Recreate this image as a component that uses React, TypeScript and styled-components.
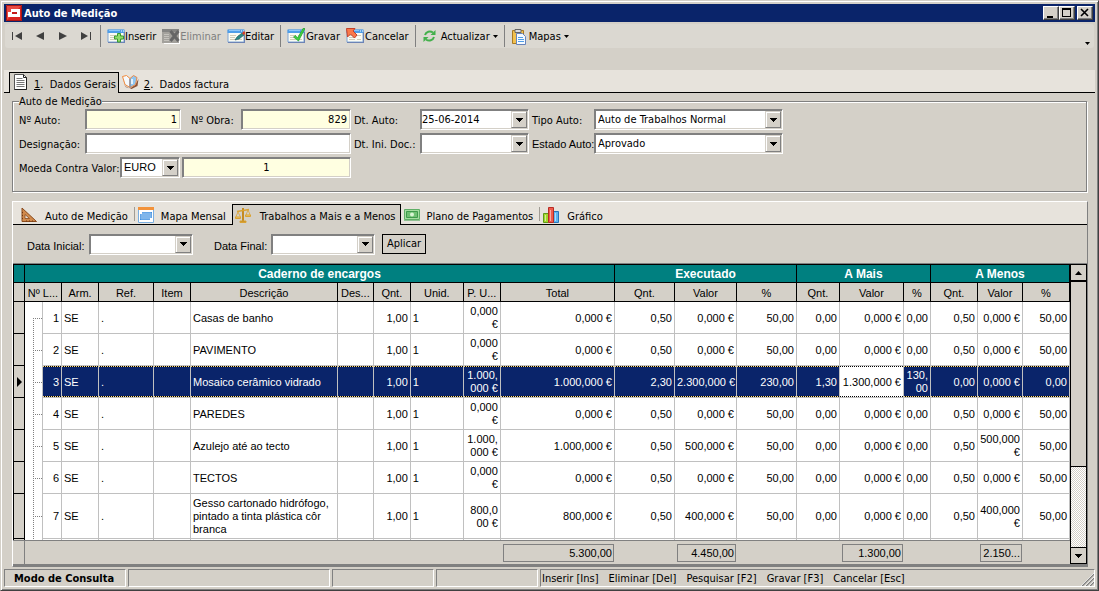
import React from "react";
import styled, { createGlobalStyle, css } from "styled-components";

const face = "#d4d0c8";
const strip = "#e7e3dc";
const shade = "#808080";
const navy = "#0a246a";
const ui = '"DejaVu Sans Condensed", "DejaVu Sans", sans-serif';
const sans = '"Liberation Sans", Arial, sans-serif';

const Global = createGlobalStyle`
  *, *::before, *::after { box-sizing: border-box; }
  body { margin: 0; background: ${face}; }
  button, input, select { font: inherit; color: inherit; margin: 0; padding: 0; border-radius: 0; }
`;

const Window = styled.div`
  display: flex;
  flex-direction: column;
  min-height: 100vh;
  padding: 3px;
  background: ${face};
  border: 1px solid;
  border-color: ${face} #404040 #404040 ${face};
  box-shadow: inset 1px 1px #fff, inset -1px -1px ${shade};
  font: 11px/13px ${ui};
  color: #000;
`;

const TitleBar = styled.header`
  display: flex;
  align-items: center;
  height: 18px;
  padding: 0 2px;
  gap: 2px;
  background: ${navy};
  color: #fff;
`;

const Title = styled.h1`
  flex: 1;
  margin: 0;
  font-size: 11px;
  font-weight: bold;
`;

const Caption = styled.div`
  display: flex;
`;

const CaptionButton = styled.button<{ $apart?: boolean }>`
  width: 16px;
  height: 14px;
  margin-left: ${(p) => (p.$apart ? "2px" : "0")};
  background: ${face};
  border: 1px solid;
  border-color: #fff #404040 #404040 #fff;
  box-shadow: inset -1px -1px ${shade};
  svg { display: block; }
`;

const ToolBar = styled.div`
  display: flex;
  align-items: center;
  height: 24px;
  margin: 2px 1px 22px;
  background: #dbd8d1;
  border-radius: 3px;
`;

const NavButton = styled.button`
  display: flex;
  justify-content: center;
  width: 23px;
  border: 0;
  background: none;
`;

const Divider = styled.span`
  width: 1px;
  height: 22px;
  margin: 0 3px;
  background: ${shade};
`;

const ToolButton = styled.button<{ $gap?: number }>`
  display: flex;
  align-items: center;
  gap: ${(p) => p.$gap || 0}px;
  padding: 0 3px;
  border: 0;
  background: none;
  white-space: nowrap;
  &:disabled { color: ${shade}; }
  svg { flex: none; }
`;

const MenuArrow = styled.svg`
  margin-left: 1px;
`;

const Overflow = styled.button`
  align-self: flex-end;
  width: 14px;
  height: 14px;
  margin-left: auto;
  border: 0;
  background: none;
`;

const TabStrip = styled.div`
  display: flex;
  align-items: flex-end;
  height: 23px;
  padding-left: 5px;
  background: linear-gradient(#000, #000) bottom / 100% 1px no-repeat ${strip};
`;

const MainTab = styled.button<{ $on?: boolean }>`
  display: flex;
  align-items: center;
  gap: 5px;
  height: 21px;
  padding: 3px 2px 0 3px;
  border: 0;
  background: none;
  white-space: pre;
  ${(p) => p.$on && css`
    background: ${face};
    border: 1px solid #000;
    border-bottom: 0;
  `}
  svg { flex: none; margin-top: -4px; }
`;

const Page = styled.main`
  flex: 1;
  display: flex;
  flex-direction: column;
  padding: 2px 7px 2px 8px;
`;

const Group = styled.fieldset`
  display: flex;
  align-items: flex-start;
  gap: 3px;
  min-width: 0;
  margin: 0 1px 0 0;
  padding: 1px 6px 13px;
  border: 1px solid ${shade};
  box-shadow: 1px 1px #fff, inset 1px 1px #fff;
`;

const Legend = styled.legend`
  padding: 0;
  height: 13px;
  background: ${face};
`;

const FieldColumn = styled.div`
  display: flex;
  flex-direction: column;
  gap: 3px;
`;

const FieldRow = styled.div`
  display: flex;
  align-items: center;
  gap: 2px;
`;

const Label = styled.label<{ $w: number; $sans?: boolean; $indent?: boolean }>`
  width: ${(p) => p.$w}px;
  padding-top: 2px;
  padding-left: ${(p) => (p.$indent ? "8px" : "0")};
  white-space: nowrap;
  font-family: ${(p) => (p.$sans ? sans : ui)};
`;

const sunken = css`
  height: 21px;
  border: 1px solid;
  border-color: ${shade} #fff #fff ${shade};
  box-shadow: inset 1px 1px ${shade}, inset -1px -1px ${face};
`;

const TextBox = styled.input<{ $w: number; $locked?: boolean; $align?: string }>`
  ${sunken}
  width: ${(p) => p.$w}px;
  padding: 0 3px;
  background: ${(p) => (p.$locked ? "#ffffe1" : "#fff")};
  text-align: ${(p) => p.$align || "left"};
  outline: 0;
`;

const ComboBox = styled.div<{ $w: number; $sans?: boolean }>`
  ${sunken}
  display: grid;
  grid-template-columns: 1fr 16px;
  width: ${(p) => p.$w}px;
  padding: 1px;
  background: #fff;
  font-family: ${(p) => (p.$sans ? sans : ui)};
  input, select {
    grid-row: 1;
    width: 100%;
    min-width: 0;
    padding: 0;
    border: 0;
    background: none;
    outline: 0;
    appearance: none;
  }
  select { grid-column: 1 / 3; padding: 0 2px; }
`;

const raised = css`
  background: ${face};
  border: 1px solid;
  border-color: ${face} ${shade} ${shade} ${face};
  box-shadow: inset 1px 1px #fff;
`;

const DropButton = styled.button`
  ${raised}
  grid-area: 1 / 2;
  display: grid;
  place-items: center;
`;

const DropMark = styled.span`
  ${raised}
  grid-area: 1 / 2;
  display: grid;
  place-items: center;
  pointer-events: none;
`;

const Panel = styled.section`
  margin-top: 9px;
  border: 1px solid;
  border-color: #fff ${shade} ${shade} #fff;
`;

const PanelTabs = styled.div`
  display: flex;
  align-items: flex-end;
  height: 23px;
  padding-left: 5px;
  background: linear-gradient(#000, #000) bottom / 100% 1px no-repeat ${strip};
`;

const PanelTab = styled.button<{ $on?: boolean }>`
  display: flex;
  align-items: center;
  gap: 7px;
  height: 21px;
  padding: 4px 6px 0 3px;
  border: 0;
  background: none;
  white-space: nowrap;
  ${(p) => p.$on && css`
    background: ${face};
    border: 1px solid #000;
    border-bottom: 0;
    padding: 3px 4px 0 2px;
  `}
  svg { flex: none; margin-top: -4px; }
`;

const TabDivider = styled.span`
  width: 1px;
  height: 14px;
  margin-bottom: 4px;
  background: #a09c94;
`;

const Filters = styled.form`
  display: flex;
  align-items: center;
  height: 38px;
  padding: 0 14px;
  gap: 2px;
  ${Label} { padding-top: 4px; }
`;

const Apply = styled.button`
  height: 20px;
  margin-left: 5px;
  padding: 0 4px 1px;
  background: ${face};
  border: 1px solid #000;
`;

const Spacer = styled.span`
  width: 17px;
`;

const GridFrame = styled.div`
  display: flex;
  border-top: 1px solid ${shade};
  border-bottom: 2px solid ${shade};
`;

const Table = styled.table`
  flex: 1;
  width: 0;
  table-layout: fixed;
  border-collapse: separate;
  border-spacing: 0;
  background: #fff;
  font: 11px/13px ${sans};
`;

const BandHead = styled.th`
  height: 19px;
  padding: 1px 0 0;
  background: #008080;
  color: #fff;
  font-size: 12px;
  border: solid #000;
  border-width: 1px 1px 1px 0;
  &:first-child { border-left-width: 1px; }
`;

const ColHead = styled.th`
  height: 19px;
  padding: 2px 0 0;
  background: ${face};
  font-weight: normal;
  white-space: nowrap;
  overflow: hidden;
  border: solid #000;
  border-width: 0 1px 1px 0;
  &:first-child { border-left-width: 1px; }
`;

const Marker = styled.td`
  padding: 0 0 0 3px;
  background: ${face};
  border: solid #000;
  border-width: 0 1px 1px 1px;
  svg { display: block; }
`;

const Branch = styled.td<{ $first?: boolean }>`
  padding: 0;
  border-right: 1px solid #c0c0c0;
  background:
    repeating-linear-gradient(90deg, ${shade} 0 1px, transparent 1px 2px) 8px 50% / 9px 1px no-repeat,
    repeating-linear-gradient(${shade} 0 1px, transparent 1px 2px) 8px 100% / 1px ${(p) => (p.$first ? "50%" : "100%")} no-repeat;
`;

const Cell = styled.td<{ $right?: boolean; $editing?: boolean; $wrap?: boolean }>`
  padding: 1px 2px 0;
  border: solid #c0c0c0;
  border-width: 0 1px 1px 0;
  text-align: ${(p) => (p.$right ? "right" : "left")};
  white-space: ${(p) => (p.$wrap ? "normal" : "pre")};
  ${(p) => p.$editing && css`
    &&& {
      color: #000;
      background:
        repeating-linear-gradient(90deg, #000 0 1px, #fff 1px 2px) top / 100% 1px no-repeat,
        repeating-linear-gradient(90deg, #000 0 1px, #fff 1px 2px) bottom / 100% 1px no-repeat,
        #fff;
      padding-left: 0;
    }
  `}
`;

const Row = styled.tr<{ $tall?: boolean; $on?: boolean }>`
  height: ${(p) => (p.$tall ? "45px" : "32px")};
  ${(p) => p.$on && css`
    ${Cell} {
      color: #fff;
      background:
        repeating-linear-gradient(90deg, #ffdb80 0 1px, #000 1px 2px) top / 100% 1px no-repeat,
        repeating-linear-gradient(90deg, #ffdb80 0 1px, #000 1px 2px) bottom / 100% 1px no-repeat,
        ${navy};
      background-clip: padding-box;
    }
  `}
`;

const NextRow = styled.tr`
  height: 1px;
  td { padding: 0; border-right: 1px solid #c0c0c0; }
  td:first-child { background: ${face}; border-color: #000; border-left: 1px solid #000; }
`;

const FootCell = styled.td`
  height: 24px;
  padding: 0 1px 0 2px;
  background: ${face};
  border-top: 1px solid ${shade};
  &:first-child { border-right: 1px solid ${shade}; }
`;

const Sum = styled.output`
  display: block;
  height: 18px;
  padding: 2px 1px 0;
  border: 1px solid ${shade};
  text-align: right;
`;

const ScrollBar = styled.div`
  display: flex;
  flex-direction: column;
  width: 17px;
  border: 1px solid #000;
  background: repeating-conic-gradient(#fff 0 25%, ${face} 0 50%) 0 0 / 2px 2px;
`;

const ScrollButton = styled.button<{ $down?: boolean }>`
  display: grid;
  place-items: center;
  height: 16px;
  background: ${face};
  border: solid #000;
  border-width: ${(p) => (p.$down ? "1px 0 0" : "0 0 1px")};
`;

const Track = styled.div`
  flex: 1;
`;

const Thumb = styled.div`
  height: 70%;
  background: ${face};
  border: solid #000;
  border-width: 1px 0;
`;

const StatusBar = styled.footer`
  display: flex;
  gap: 2px;
  height: 18px;
`;

const StatusPanel = styled.div<{ $w?: number; $bold?: boolean }>`
  display: flex;
  align-items: center;
  gap: 10px;
  ${(p) => (p.$w ? `width: ${p.$w}px;` : "flex: 1;")}
  padding-left: ${(p) => (p.$bold ? "9px" : "1px")};
  font-weight: ${(p) => (p.$bold ? "bold" : "normal")};
  white-space: nowrap;
  border: 1px solid;
  border-color: ${shade} #fff #fff ${shade};
`;

const Grip = styled.svg`
  margin-left: auto;
  align-self: flex-end;
`;

const Down = () => (
  <svg width="7" height="4" viewBox="0 0 7 4" shapeRendering="crispEdges"><path d="M0 0h7v1H6v1H5v1H4v1H3V3H2V2H1V1H0z" /></svg>
);

const Sheet = () => (
  <>
    <path d="M1 2h16v12H1z" fill="#fbfbf2" stroke="#7fa6d6" />
    <path d="M0.500 1.500h17V5H0.500z" fill="#4f9ee8" />
    <path d="M2 2.500h11" stroke="#8cc6f8" />
    <path d="M14 3h1M16 3h1" stroke="#fff" />
    <path d="M3 7.500h6M3 9.500h5M3 11.500h6M11 7.500h4M11 11.500h4" stroke="#cfcdb8" />
    <path d="M1 14.500h17M17.500 4v11" stroke="#6c83b5" />
  </>
);

const SheetIcon = ({ kind }: { kind: string }) => (
  <svg width="18" height="16" viewBox="0 0 18 16">
    {kind === "delete" ? (
      <>
        <path d="M2 3h16v13H2z" fill="#fff" />
        <path d="M0 1h17v14H0z" fill="#a3a19c" />
        <path d="M0 1h17v3H0z" fill="#858583" />
        <path d="M2 6.500h5M2 8.500h5M2 10.500h5M2 12.500h5" stroke="#c4c2bc" />
        <path d="M8.500 3l8 10M16.500 3l-8 10" stroke="#666" strokeWidth="3" />
      </>
    ) : <Sheet />}
    {kind === "insert" && <path d="M10.500 5.500h3v2.500h3v3h-3v3h-3v-3h-3V8h3z" fill="#8fdc6a" stroke="#3a9a2c" />}
    {kind === "edit" && (
      <>
        <path d="M8 12l2-3 5-4 2 2-5 4z" fill="#2b8a83" stroke="#1d5d64" strokeWidth=".7" />
        <path d="M15 5l2-2 1 1v2l-1.500 1z" fill="#d0402c" />
      </>
    )}
    {kind === "save" && <path d="M6.500 9l2-1.500 2 2.500L16 0.500h2L11.500 13z" fill="#3fd13f" stroke="#1f9a2c" strokeWidth=".7" />}
    {kind === "cancel" && <path d="M0.500 0.500h8.500L7 3l4 4-2.500 3-4-4-3 3z" fill="#f9794a" stroke="#c4402a" />}
  </svg>
);

const Logo = () => (
  <svg width="16" height="16" viewBox="0 0 16 16">
    <rect width="16" height="16" fill="#d8231f" />
    <path d="M0 0h16L0 16z" fill="#e84a42" />
    <path d="M0.500 0.500h15v15H0.500z" fill="none" stroke="#a81414" />
    <path d="M5 4h9v8H2V7h3z" fill="#fff" />
    <path d="M6 7h5v2H6z" fill="#c41a18" />
  </svg>
);

const PageIcon = () => (
  <svg width="16" height="17" viewBox="-1 0 16 17">
    <path d="M0.500 0.500h9l3 3v12h-12z" fill="#fff" stroke="#555" />
    <path d="M9.500 0.500v3h3M12.500 3.500v12h-12" fill="none" stroke="#222" />
    <path d="M2.500 4.500h6M2.500 6.500h8M2.500 8.500h8M2.500 10.500h8M2.500 12.500h8" stroke="#777" />
  </svg>
);

const BookIcon = () => (
  <svg width="17" height="14" viewBox="0 0 17 14">
    <path d="M1 3l2 8 5 2.500 5-3.500 3.500-6-1 7-6 3-6-2z" fill="#8a5238" />
    <path d="M0.500 1.500L4.500 0.500 8 3.500v9L3 9.500z" fill="#f5fafe" stroke="#f08a3c" />
    <path d="M8 3.500L11.500 0.500 15 2.500 13.500 9.500 8 12.500z" fill="#8fc6f2" stroke="#e88a4a" />
    <path d="M8 4v8.500" stroke="#5d93c8" />
    <path d="M10 4v5" stroke="#fff" strokeWidth="1.500" fill="none" />
  </svg>
);

const Refresh = () => (
  <svg width="17" height="14" viewBox="0 0 17 14" fill="none" stroke="#43b04b" strokeWidth="2">
    <path d="M3 6C4 2.500 8 1.500 11 3.500M12 8c-1 3.500-5 4.500-8 2.500" />
    <path d="M13.500 1v5h-5zM1.500 13V8h5z" fill="#43b04b" stroke="none" />
  </svg>
);

const Clipboard = () => (
  <svg width="16" height="17" viewBox="0 0 16 17">
    <path d="M1.500 2.500h11v13h-11z" fill="#f2c14e" stroke="#a87a24" />
    <path d="M4 1.500h6v3H4z" fill="#ddd" stroke="#666" />
    <path d="M5.500 5.500h6l3 3v8h-9z" fill="#f5faff" stroke="#6583bd" />
    <path d="M7 9.500h5M7 11.500h6M7 13.500h6" stroke="#4f9ee8" />
  </svg>
);

const SquareIcon = () => (
  <svg width="17" height="16" viewBox="0 0 17 16">
    <path d="M1 1L15.500 14.500H1z" fill="#d08a4c" stroke="#8a4a1c" />
    <path d="M4 7.500l4.500 4H4z" fill={strip} stroke="#8a4a1c" strokeWidth=".8" />
    <path d="M1 5.500h1M1 8.500h1M1 11.500h1M5.500 13.500v1M8.500 13.500v1M11.500 13.500v1" stroke="#6e3510" />
  </svg>
);

const CalendarIcon = () => (
  <svg width="16" height="16" viewBox="0 0 16 16">
    <path d="M0.500 1.500h15v14h-15z" fill="#fff" stroke="#7aaee0" />
    <path d="M0 0h16v3H0z" fill="#f2923a" />
    <path d="M2 5h12v8H2z" fill="#3f8fe0" />
    <path d="M2 7h12M2 9h12M2 11h12M4 5v8M6 5v8M8 5v8M10 5v8M12 5v8" stroke="#d5e9fb" strokeWidth=".5" />
    <path d="M2 5h2v2H2zM12 11h2v2h-2z" fill="#fff" />
  </svg>
);

const ScalesIcon = () => (
  <svg width="18" height="16" viewBox="0 0 18 16" fill="none" stroke="#d9a233">
    <path d="M8 1v13" stroke="#c48a22" strokeWidth="2" />
    <path d="M2 4.500L14 2.500" strokeWidth="1.500" />
    <path d="M3 5L0.800 10M3 5l2.500 5M13 3l-2 5M13 3l2.200 5" strokeWidth=".8" />
    <path d="M0.500 10h5v1.500h-5zM10.500 8h5v1.500h-5z" fill="#f2cc66" />
    <path d="M5 14h6v1.500H5z" fill="#c48a22" />
  </svg>
);

const MoneyIcon = () => (
  <svg width="16" height="12" viewBox="0 0 16 12">
    <path d="M0.500 0.500h15v10h-15z" fill="#a4dca0" stroke="#5fae66" />
    <path d="M2.500 2.500h11v6h-11z" fill="#6fc072" stroke="#3f9a4c" />
    <circle cx="8" cy="5.500" r="2" fill="#d9f5d4" />
    <path d="M0 11.500h16" stroke="#8fbf90" />
  </svg>
);

const ChartIcon = () => (
  <svg width="17" height="16" viewBox="0 0 17 16">
    <path d="M0.500 6.500h5v9h-5z" fill="#a2d62a" stroke="#5c9a18" />
    <path d="M10.500 4.500h5v11h-5z" fill="#5cb4f0" stroke="#2874b8" />
    <path d="M5.500 0.500h5v15h-5z" fill="#ee5a4a" stroke="#b82c24" />
    <path d="M2.500 8v6M7.500 3v11M12.500 6v8" stroke="#fff" strokeOpacity=".5" />
  </svg>
);

const navShapes = [
  ["Primeiro", "M0 0h1v8H0zM10 0v8L3 4z"],
  ["Anterior", "M9 0v8L1 4z"],
  ["Seguinte", "M1 0v8L9 4z"],
  ["Último", "M0 0v8L7 4zM9 0h1v8H9z"],
];

const columns: [string, number | undefined][] = [
  ["Arm.", 37], ["Ref.", 55], ["Item", 37], ["Descrição", undefined], ["Des...", 36], ["Qnt.", 37],
  ["Unid.", 53], ["P. U...", 37], ["Total", 114], ["Qnt.", 60], ["Valor", 62], ["%", 60],
  ["Qnt.", 43], ["Valor", 64], ["%", 27], ["Qnt.", 47], ["Valor", 45], ["%", 47],
];

const works: string[][] = [
  ["Casas de banho", "0,000\n€", "0,000 €", "0,50", "0,000 €", "50,00", "0,00", "0,000 €", "0,00", "0,50", "0,000 €", "50,00"],
  ["PAVIMENTO", "0,000\n€", "0,000 €", "0,50", "0,000 €", "50,00", "0,00", "0,000 €", "0,00", "0,50", "0,000 €", "50,00"],
  ["Mosaico cerâmico vidrado", "1.000,\n000 €", "1.000,000 €", "2,30", "2.300,000 €", "230,00", "1,30", "1.300,000 €", "130,\n00", "0,00", "0,000 €", "0,00"],
  ["PAREDES", "0,000\n€", "0,000 €", "0,50", "0,000 €", "50,00", "0,00", "0,000 €", "0,00", "0,50", "0,000 €", "50,00"],
  ["Azulejo até ao tecto", "1.000,\n000 €", "1.000,000 €", "0,50", "500,000 €", "50,00", "0,00", "0,000 €", "0,00", "0,50", "500,000\n€", "50,00"],
  ["TECTOS", "0,000\n€", "0,000 €", "0,50", "0,000 €", "50,00", "0,00", "0,000 €", "0,00", "0,50", "0,000 €", "50,00"],
  ["Gesso cartonado hidrófogo, pintado a tinta plástica côr branca", "800,0\n00 €", "800,000 €", "0,50", "400,000 €", "50,00", "0,00", "0,000 €", "0,00", "0,50", "400,000\n€", "50,00"],
];

const sums: Record<number, string> = { 8: "5.300,00", 10: "4.450,00", 13: "1.300,00", 16: "2.150..." };

const current = 2;

function DateField({ id, w, value = "" }: { id: string; w: number; value?: string }) {
  return (
    <ComboBox $w={w}>
      <input id={id} defaultValue={value} />
      <DropButton type="button" aria-label="Abrir calendário"><Down /></DropButton>
    </ComboBox>
  );
}

function Choice({ id, w, value, isSans }: { id: string; w: number; value: string; isSans?: boolean }) {
  return (
    <ComboBox $w={w} $sans={isSans}>
      <select id={id} defaultValue={value}><option>{value}</option></select>
      <DropMark><Down /></DropMark>
    </ComboBox>
  );
}

function Works() {
  return (
    <Table>
      <colgroup>
        <col width={12} /><col width={18} /><col width={19} />
        {columns.map(([, w], i) => <col key={i} width={w} />)}
      </colgroup>
      <thead>
        <tr>
          <BandHead />
          <BandHead colSpan={11}>Caderno de encargos</BandHead>
          <BandHead colSpan={3}>Executado</BandHead>
          <BandHead colSpan={3}>A Mais</BandHead>
          <BandHead colSpan={3}>A Menos</BandHead>
        </tr>
        <tr>
          <ColHead />
          <ColHead colSpan={2}>Nº L...</ColHead>
          {columns.map(([name], i) => <ColHead key={i}>{name}</ColHead>)}
        </tr>
      </thead>
      <tbody>
        {works.map(([description, ...values], i) => (
          <Row key={i} $on={i === current} $tall={i === 6}>
            <Marker>
              {i === current && <svg width="6" height="10" viewBox="0 0 6 10"><path d="M0 0l5 5-5 5z" /></svg>}
            </Marker>
            <Branch $first={i === 0} />
            <Cell $right>{i + 1}</Cell>
            <Cell>SE</Cell>
            <Cell>.</Cell>
            <Cell />
            <Cell $wrap>{description}</Cell>
            <Cell />
            <Cell $right>1,00</Cell>
            <Cell>1</Cell>
            {values.map((v, j) => (
              <Cell key={j} $right $editing={i === current && j === 6}>{v}</Cell>
            ))}
          </Row>
        ))}
        <NextRow>{Array.from({ length: 21 }, (_, i) => <td key={i} />)}</NextRow>
      </tbody>
      <tfoot>
        <tr>
          <FootCell /><FootCell /><FootCell />
          {columns.map((_, i) => <FootCell key={i}>{sums[i] && <Sum>{sums[i]}</Sum>}</FootCell>)}
        </tr>
      </tfoot>
    </Table>
  );
}

export default function App() {
  return (
    <>
      <Global />
      <Window>
        <TitleBar>
          <Logo />
          <Title>Auto de Medição</Title>
          <Caption>
            <CaptionButton aria-label="Minimizar"><svg width="14" height="12"><path d="M3 9h6v2H3z" /></svg></CaptionButton>
            <CaptionButton aria-label="Maximizar"><svg width="14" height="12"><path d="M2 1h9v9H2zM3 3v6h7V3z" fillRule="evenodd" /></svg></CaptionButton>
            <CaptionButton aria-label="Fechar" $apart><svg width="14" height="12"><path d="M3 2l7 7M10 2L3 9" stroke="#000" strokeWidth="1.600" /></svg></CaptionButton>
          </Caption>
        </TitleBar>

        <ToolBar>
          {navShapes.map(([name, d]) => (
            <NavButton key={name} aria-label={name}><svg width="10" height="8" viewBox="0 0 10 8"><path d={d} fill="#404040" /></svg></NavButton>
          ))}
          <Divider />
          <ToolButton><SheetIcon kind="insert" />Inserir</ToolButton>
          <ToolButton disabled><SheetIcon kind="delete" />Eliminar</ToolButton>
          <ToolButton><SheetIcon kind="edit" />Editar</ToolButton>
          <Divider />
          <ToolButton $gap={1}><SheetIcon kind="save" />Gravar</ToolButton>
          <ToolButton $gap={1}><SheetIcon kind="cancel" />Cancelar</ToolButton>
          <Divider />
          <ToolButton $gap={2}><Refresh />Actualizar<MenuArrow width="5" height="3"><path d="M0 0h5L2.500 3z" /></MenuArrow></ToolButton>
          <Divider />
          <ToolButton $gap={2}><Clipboard />Mapas<MenuArrow width="5" height="3"><path d="M0 0h5L2.500 3z" /></MenuArrow></ToolButton>
          <Overflow aria-label="Mais opções"><svg width="5" height="3"><path d="M0 0h5L2.500 3z" /></svg></Overflow>
        </ToolBar>

        <TabStrip role="tablist">
          <MainTab role="tab" aria-selected $on><PageIcon /><span><u>1</u>.  Dados Gerais</span></MainTab>
          <MainTab role="tab"><BookIcon /><span><u>2</u>.  Dados factura</span></MainTab>
        </TabStrip>

        <Page>
          <Group>
            <Legend>Auto de Medição</Legend>
            <FieldColumn>
              <FieldRow>
                <Label $w={64} htmlFor="auto">Nº Auto:</Label>
                <TextBox id="auto" $w={96} $locked $align="right" readOnly value="1" />
                <Label $w={56} $indent htmlFor="obra">Nº Obra:</Label>
                <TextBox id="obra" $w={110} $locked $align="right" readOnly value="829" />
              </FieldRow>
              <FieldRow>
                <Label $w={64} htmlFor="desig">Designação:</Label>
                <TextBox id="desig" $w={266} />
              </FieldRow>
              <FieldRow>
                <Label $w={99} htmlFor="moeda">Moeda Contra Valor:</Label>
                <Choice id="moeda" w={60} value="EURO" isSans />
                <TextBox aria-label="Contra valor" $w={169} $locked $align="center" readOnly value="1" />
              </FieldRow>
            </FieldColumn>
            <FieldColumn>
              <FieldRow>
                <Label $w={64} htmlFor="dt">Dt. Auto:</Label>
                <DateField id="dt" w={109} value="25-06-2014" />
              </FieldRow>
              <FieldRow>
                <Label $w={64} htmlFor="ini">Dt. Ini. Doc.:</Label>
                <DateField id="ini" w={109} />
              </FieldRow>
            </FieldColumn>
            <FieldColumn>
              <FieldRow>
                <Label $w={60} htmlFor="tipo">Tipo Auto:</Label>
                <Choice id="tipo" w={189} value="Auto de Trabalhos Normal" />
              </FieldRow>
              <FieldRow>
                <Label $w={60} $sans htmlFor="estado">Estado Auto:</Label>
                <Choice id="estado" w={189} value="Aprovado" />
              </FieldRow>
            </FieldColumn>
          </Group>

          <Panel>
            <PanelTabs role="tablist">
              <PanelTab role="tab"><SquareIcon />Auto de Medição</PanelTab>
              <TabDivider />
              <PanelTab role="tab"><CalendarIcon />Mapa Mensal</PanelTab>
              <PanelTab role="tab" aria-selected $on><ScalesIcon />Trabalhos a Mais e a Menos</PanelTab>
              <PanelTab role="tab"><MoneyIcon />Plano de Pagamentos</PanelTab>
              <TabDivider />
              <PanelTab role="tab"><ChartIcon />Gráfico</PanelTab>
            </PanelTabs>
            <Filters onSubmit={(e) => e.preventDefault()}>
              <Label $w={60} $sans htmlFor="de">Data Inicial:</Label>
              <DateField id="de" w={104} />
              <Spacer />
              <Label $w={55} $sans htmlFor="ate">Data Final:</Label>
              <DateField id="ate" w={104} />
              <Apply>Aplicar</Apply>
            </Filters>
            <GridFrame>
              <Works />
              <ScrollBar>
                <ScrollButton aria-label="Subir"><svg width="7" height="4"><path d="M0 4h7L3.500 0z" /></svg></ScrollButton>
                <Track><Thumb /></Track>
                <ScrollButton $down aria-label="Descer"><Down /></ScrollButton>
              </ScrollBar>
            </GridFrame>
          </Panel>
        </Page>

        <StatusBar>
          <StatusPanel $w={122} $bold>Modo de Consulta</StatusPanel>
          <StatusPanel $w={202} />
          <StatusPanel $w={102} />
          <StatusPanel $w={102} />
          <StatusPanel>
            <span>Inserir [Ins]</span><span>Eliminar [Del]</span><span>Pesquisar [F2]</span>
            <span>Gravar [F3]</span><span>Cancelar [Esc]</span>
            <Grip width="13" height="13" viewBox="0 0 13 13"><path d="M1 13L13 1M5 13L13 5M9 13L13 9" stroke="#808080" strokeWidth="1.500" /><path d="M0 13L13 0M4 13L13 4M8 13L13 8" stroke="#fff" strokeWidth=".7" /></Grip>
          </StatusPanel>
        </StatusBar>
      </Window>
    </>
  );
}
